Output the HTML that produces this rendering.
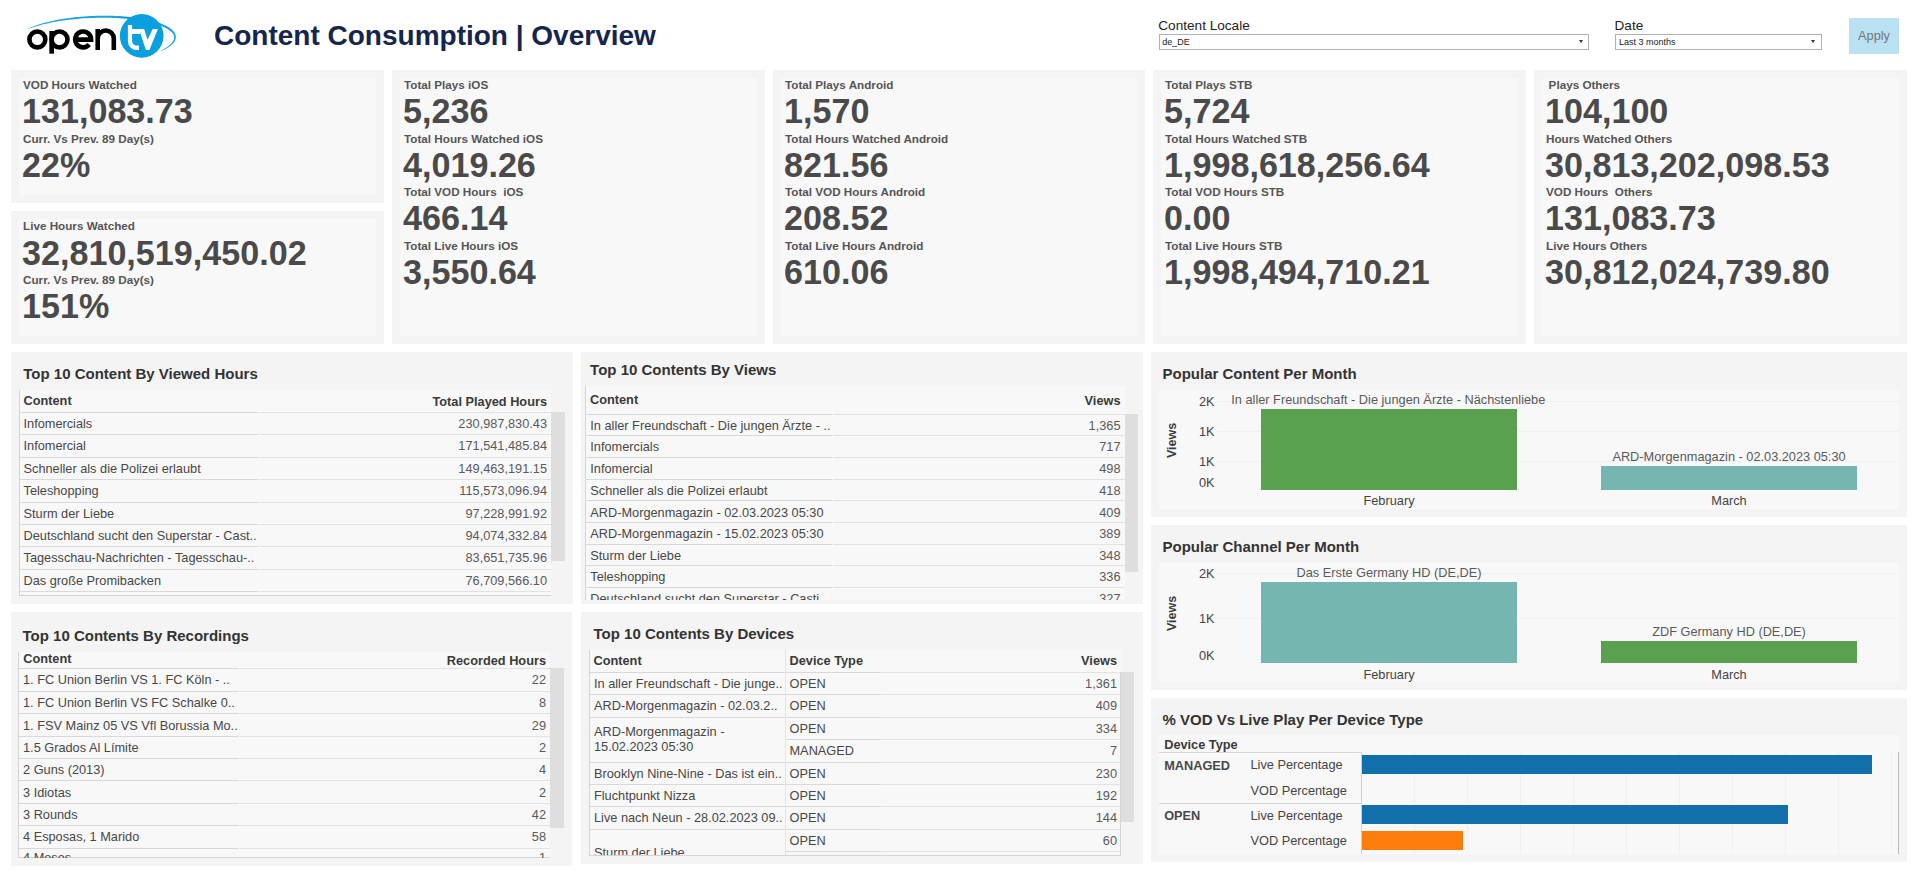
<!DOCTYPE html>
<html><head><meta charset="utf-8"><title>Content Consumption | Overview</title>
<style>
html,body{margin:0;padding:0;background:#fff;}
body{width:1912px;height:875px;position:relative;overflow:hidden;font-family:"Liberation Sans", sans-serif;}
body div{position:absolute;box-sizing:content-box;}
.t{white-space:pre;line-height:1;font-family:"Liberation Sans", sans-serif;}
</style></head><body>
<svg style="position:absolute;left:0;top:0" width="200" height="70" viewBox="0 0 200 70">
<path d="M27.41,29.12 L29.42,28.45 L31.48,27.73 L33.64,27.02 L35.88,26.33 L38.22,25.65 L40.63,24.99 L43.13,24.36 L45.70,23.74 L48.35,23.16 L51.06,22.59 L53.84,22.06 L56.69,21.55 L59.58,21.07 L62.53,20.62 L65.53,20.20 L68.57,19.81 L71.65,19.46 L74.77,19.14 L77.91,18.85 L81.07,18.59 L84.26,18.37 L87.46,18.18 L90.66,18.03 L93.87,17.91 L97.08,17.83 L100.29,17.78 L103.48,17.77 L106.66,17.79 L109.81,17.85 L112.94,17.95 L116.04,18.08 L119.10,18.25 L122.12,18.45 L125.10,18.68 L128.03,18.95 L130.90,19.26 L133.71,19.59 L136.46,19.96 L139.14,20.36 L141.75,20.80 L144.28,21.26 L146.73,21.76 L149.10,22.28 L151.37,22.83 L153.56,23.41 L155.65,24.01 L157.64,24.64 L159.53,25.29 L161.32,25.97 L163.00,26.67 L164.56,27.38 L166.01,28.11 L167.35,28.86 L168.57,29.63 L169.66,30.40 L170.64,31.18 L171.49,31.97 L172.22,32.77 L172.83,33.56 L173.33,34.36 L173.70,35.15 L173.96,35.94 L174.11,36.74 L174.15,37.55 L174.08,38.38 L173.90,39.22 L173.59,40.08 L173.17,40.96 L172.61,41.85 L171.94,42.76 L171.13,43.67 L170.20,44.59 L169.15,45.52 L167.97,46.44 L166.67,47.36 L165.26,48.28 L163.74,49.19 L162.10,50.11 L160.39,51.08 L160.45,51.22 L162.30,50.52 L164.02,49.73 L165.63,48.91 L167.13,48.07 L168.51,47.21 L169.78,46.33 L170.94,45.43 L171.97,44.52 L172.89,43.59 L173.70,42.64 L174.37,41.67 L174.93,40.69 L175.35,39.69 L175.64,38.67 L175.79,37.63 L175.79,36.60 L175.65,35.56 L175.37,34.53 L174.95,33.52 L174.39,32.53 L173.70,31.56 L172.89,30.62 L171.95,29.70 L170.89,28.81 L169.71,27.94 L168.42,27.09 L167.01,26.27 L165.49,25.48 L163.86,24.71 L162.13,23.97 L160.28,23.25 L158.34,22.56 L156.30,21.90 L154.16,21.27 L151.93,20.67 L149.60,20.10 L147.20,19.56 L144.70,19.06 L142.13,18.58 L139.49,18.14 L136.77,17.74 L133.99,17.37 L131.15,17.03 L128.24,16.73 L125.28,16.47 L122.28,16.24 L119.23,16.06 L116.14,15.90 L113.01,15.79 L109.86,15.71 L106.68,15.68 L103.48,15.67 L100.26,15.71 L97.03,15.79 L93.80,15.90 L90.57,16.05 L87.34,16.24 L84.12,16.47 L80.92,16.73 L77.74,17.03 L74.58,17.36 L71.45,17.74 L68.36,18.14 L65.30,18.58 L62.29,19.06 L59.33,19.57 L56.42,20.11 L53.57,20.68 L50.78,21.28 L48.06,21.92 L45.42,22.58 L42.84,23.28 L40.35,24.00 L37.94,24.75 L35.62,25.52 L33.40,26.33 L31.27,27.16 L29.25,28.03 L27.36,28.98Z" fill="#1aa3e2"/>
<circle cx="141.7" cy="35.85" r="21.85" fill="#0aa0e0"/>
<g fill="none" stroke="#000" stroke-width="4.6">
<circle cx="37.35" cy="39.45" r="7.95"/>
<circle cx="59.55" cy="39.45" r="7.95"/>
<path d="M51.65,31 V53.7"/>
<path d="M75,39.6 H91.1 A7.95,7.95 0 1 0 89.2,44.6"/>
<path d="M97.7,29 V49.9 M97.7,38.6 A8.05,8.05 0 0 1 113.8,38.6 V49.9"/>
</g>
<path d="M127.9,24.9 H132.1 V29.1 H140.2 V34 H132.1 V41 A4.5,4.5 0 0 0 136.6,45.5 H139 V50 H136.6 A8.7,8.7 0 0 1 127.9,41.3 Z" fill="#fff"/>
<path d="M139,29.1 L144.1,29.1 L147.6,39.8 L152.7,29.1 L157.9,29.1 L149.4,50 L145.9,50 Z" fill="#fff"/>
</svg>
<div class="t" style="left:214.00px;top:21.50px;font-size:28px;font-weight:bold;color:#15254b;">Content Consumption | Overview</div>
<div class="t" style="left:1158.30px;top:19.09px;font-size:13.6px;font-weight:normal;color:#222;">Content Locale</div>
<div style="left:1159px;top:34px;width:428px;height:14px;border:1px solid #b0b0b0;background:#fff"></div>
<div class="t" style="left:1162.30px;top:38.18px;font-size:9px;font-weight:normal;color:#222;">de_DE</div>
<div class="t" style="left:1614.50px;top:18.69px;font-size:13.6px;font-weight:normal;color:#222;">Date</div>
<div style="left:1615px;top:34px;width:205px;height:14px;border:1px solid #b0b0b0;background:#fff"></div>
<div class="t" style="left:1619.00px;top:38.18px;font-size:9px;font-weight:normal;color:#222;">Last 3 months</div>
<div style="left:1578.7px;top:40.3px;width:0;height:0;border-left:2.5px solid transparent;border-right:2.5px solid transparent;border-top:3.8px solid #333"></div>
<div style="left:1811.2px;top:40.3px;width:0;height:0;border-left:2.5px solid transparent;border-right:2.5px solid transparent;border-top:3.8px solid #333"></div>
<div style="left:1849px;top:18px;width:50px;height:36px;background:#b9e1f1;"></div>
<div class="t" style="left:1849.00px;width:50px;text-align:center;top:29.71px;font-size:12.75px;font-weight:normal;color:#777;">Apply</div>
<div style="left:11px;top:70px;width:373px;height:133px;background:#f4f4f4;"></div>
<div style="left:19px;top:78px;width:357px;height:117px;background:#f8f8f8;"></div>
<div class="t" style="left:23.00px;top:78.80px;font-size:11.7px;font-weight:bold;color:#555;">VOD Hours Watched</div>
<div class="t" style="left:22.30px;top:93.47px;font-size:35px;font-weight:bold;color:#4a4a4a;transform:scaleX(0.975);transform-origin:0 0;">131,083.73</div>
<div class="t" style="left:23.00px;top:132.55px;font-size:11.7px;font-weight:bold;color:#555;">Curr. Vs Prev. 89 Day(s)</div>
<div class="t" style="left:22.30px;top:146.97px;font-size:35px;font-weight:bold;color:#4a4a4a;transform:scaleX(0.975);transform-origin:0 0;">22%</div>
<div style="left:11px;top:211px;width:373px;height:133px;background:#f4f4f4;"></div>
<div style="left:19px;top:219px;width:357px;height:117px;background:#f8f8f8;"></div>
<div class="t" style="left:23.00px;top:220.30px;font-size:11.7px;font-weight:bold;color:#555;">Live Hours Watched</div>
<div class="t" style="left:22.30px;top:234.97px;font-size:35px;font-weight:bold;color:#4a4a4a;transform:scaleX(0.975);transform-origin:0 0;">32,810,519,450.02</div>
<div class="t" style="left:23.00px;top:274.05px;font-size:11.7px;font-weight:bold;color:#555;">Curr. Vs Prev. 89 Day(s)</div>
<div class="t" style="left:22.30px;top:288.47px;font-size:35px;font-weight:bold;color:#4a4a4a;transform:scaleX(0.975);transform-origin:0 0;">151%</div>
<div style="left:392px;top:70px;width:373px;height:274px;background:#f4f4f4;"></div>
<div style="left:400px;top:78px;width:357px;height:258px;background:#f8f8f8;"></div>
<div class="t" style="left:404.00px;top:78.80px;font-size:11.7px;font-weight:bold;color:#555;">Total Plays iOS</div>
<div class="t" style="left:403.30px;top:93.47px;font-size:35px;font-weight:bold;color:#4a4a4a;transform:scaleX(0.975);transform-origin:0 0;">5,236</div>
<div class="t" style="left:404.00px;top:132.55px;font-size:11.7px;font-weight:bold;color:#555;">Total Hours Watched iOS</div>
<div class="t" style="left:403.30px;top:146.97px;font-size:35px;font-weight:bold;color:#4a4a4a;transform:scaleX(0.975);transform-origin:0 0;">4,019.26</div>
<div class="t" style="left:404.00px;top:186.30px;font-size:11.7px;font-weight:bold;color:#555;">Total VOD Hours  iOS</div>
<div class="t" style="left:403.30px;top:200.47px;font-size:35px;font-weight:bold;color:#4a4a4a;transform:scaleX(0.975);transform-origin:0 0;">466.14</div>
<div class="t" style="left:404.00px;top:240.05px;font-size:11.7px;font-weight:bold;color:#555;">Total Live Hours iOS</div>
<div class="t" style="left:403.30px;top:253.97px;font-size:35px;font-weight:bold;color:#4a4a4a;transform:scaleX(0.975);transform-origin:0 0;">3,550.64</div>
<div style="left:773px;top:70px;width:372px;height:274px;background:#f4f4f4;"></div>
<div style="left:781px;top:78px;width:356px;height:258px;background:#f8f8f8;"></div>
<div class="t" style="left:785.00px;top:78.80px;font-size:11.7px;font-weight:bold;color:#555;">Total Plays Android</div>
<div class="t" style="left:784.30px;top:93.47px;font-size:35px;font-weight:bold;color:#4a4a4a;transform:scaleX(0.975);transform-origin:0 0;">1,570</div>
<div class="t" style="left:785.00px;top:132.55px;font-size:11.7px;font-weight:bold;color:#555;">Total Hours Watched Android</div>
<div class="t" style="left:784.30px;top:146.97px;font-size:35px;font-weight:bold;color:#4a4a4a;transform:scaleX(0.975);transform-origin:0 0;">821.56</div>
<div class="t" style="left:785.00px;top:186.30px;font-size:11.7px;font-weight:bold;color:#555;">Total VOD Hours Android</div>
<div class="t" style="left:784.30px;top:200.47px;font-size:35px;font-weight:bold;color:#4a4a4a;transform:scaleX(0.975);transform-origin:0 0;">208.52</div>
<div class="t" style="left:785.00px;top:240.05px;font-size:11.7px;font-weight:bold;color:#555;">Total Live Hours Android</div>
<div class="t" style="left:784.30px;top:253.97px;font-size:35px;font-weight:bold;color:#4a4a4a;transform:scaleX(0.975);transform-origin:0 0;">610.06</div>
<div style="left:1153px;top:70px;width:373px;height:274px;background:#f4f4f4;"></div>
<div style="left:1161px;top:78px;width:357px;height:258px;background:#f8f8f8;"></div>
<div class="t" style="left:1165.00px;top:78.80px;font-size:11.7px;font-weight:bold;color:#555;">Total Plays STB</div>
<div class="t" style="left:1164.30px;top:93.47px;font-size:35px;font-weight:bold;color:#4a4a4a;transform:scaleX(0.975);transform-origin:0 0;">5,724</div>
<div class="t" style="left:1165.00px;top:132.55px;font-size:11.7px;font-weight:bold;color:#555;">Total Hours Watched STB</div>
<div class="t" style="left:1164.30px;top:146.97px;font-size:35px;font-weight:bold;color:#4a4a4a;transform:scaleX(0.975);transform-origin:0 0;">1,998,618,256.64</div>
<div class="t" style="left:1165.00px;top:186.30px;font-size:11.7px;font-weight:bold;color:#555;">Total VOD Hours STB</div>
<div class="t" style="left:1164.30px;top:200.47px;font-size:35px;font-weight:bold;color:#4a4a4a;transform:scaleX(0.975);transform-origin:0 0;">0.00</div>
<div class="t" style="left:1165.00px;top:240.05px;font-size:11.7px;font-weight:bold;color:#555;">Total Live Hours STB</div>
<div class="t" style="left:1164.30px;top:253.97px;font-size:35px;font-weight:bold;color:#4a4a4a;transform:scaleX(0.975);transform-origin:0 0;">1,998,494,710.21</div>
<div style="left:1534px;top:70px;width:373px;height:274px;background:#f4f4f4;"></div>
<div style="left:1542px;top:78px;width:357px;height:258px;background:#f8f8f8;"></div>
<div class="t" style="left:1548.60px;top:78.80px;font-size:11.7px;font-weight:bold;color:#555;">Plays Others</div>
<div class="t" style="left:1545.30px;top:93.47px;font-size:35px;font-weight:bold;color:#4a4a4a;transform:scaleX(0.975);transform-origin:0 0;">104,100</div>
<div class="t" style="left:1546.00px;top:132.55px;font-size:11.7px;font-weight:bold;color:#555;">Hours Watched Others</div>
<div class="t" style="left:1545.30px;top:146.97px;font-size:35px;font-weight:bold;color:#4a4a4a;transform:scaleX(0.975);transform-origin:0 0;">30,813,202,098.53</div>
<div class="t" style="left:1546.00px;top:186.30px;font-size:11.7px;font-weight:bold;color:#555;">VOD Hours  Others</div>
<div class="t" style="left:1545.30px;top:200.47px;font-size:35px;font-weight:bold;color:#4a4a4a;transform:scaleX(0.975);transform-origin:0 0;">131,083.73</div>
<div class="t" style="left:1546.00px;top:240.05px;font-size:11.7px;font-weight:bold;color:#555;">Live Hours Others</div>
<div class="t" style="left:1545.30px;top:253.97px;font-size:35px;font-weight:bold;color:#4a4a4a;transform:scaleX(0.975);transform-origin:0 0;">30,812,024,739.80</div>
<div style="left:11px;top:352px;width:562px;height:252px;background:#f4f4f4;"></div>
<div class="t" style="left:23.30px;top:366.30px;font-size:15px;font-weight:bold;color:#333;">Top 10 Content By Viewed Hours</div>
<div style="left:19px;top:390px;width:532px;height:206px;background:#f8f8f8;"></div>
<div style="left:19.00px;top:390px;width:1px;height:206.00px;background:#d4d4d4"></div>
<div style="left:19px;top:595.00px;width:532px;height:1px;background:#d4d4d4"></div>
<div style="left:20px;top:411.80px;width:239px;height:1px;background:#d9d9d9"></div>
<div style="left:260px;top:411.80px;width:291px;height:1px;background:#e2e2e2"></div>
<div style="left:20px;top:434.00px;width:239px;height:1px;background:#d9d9d9"></div>
<div style="left:260px;top:434.00px;width:291px;height:1px;background:#e2e2e2"></div>
<div style="left:20px;top:456.50px;width:239px;height:1px;background:#d9d9d9"></div>
<div style="left:260px;top:456.50px;width:291px;height:1px;background:#e2e2e2"></div>
<div style="left:20px;top:478.80px;width:239px;height:1px;background:#d9d9d9"></div>
<div style="left:260px;top:478.80px;width:291px;height:1px;background:#e2e2e2"></div>
<div style="left:20px;top:501.60px;width:239px;height:1px;background:#d9d9d9"></div>
<div style="left:260px;top:501.60px;width:291px;height:1px;background:#e2e2e2"></div>
<div style="left:20px;top:523.80px;width:239px;height:1px;background:#d9d9d9"></div>
<div style="left:260px;top:523.80px;width:291px;height:1px;background:#e2e2e2"></div>
<div style="left:20px;top:546.00px;width:239px;height:1px;background:#d9d9d9"></div>
<div style="left:260px;top:546.00px;width:291px;height:1px;background:#e2e2e2"></div>
<div style="left:20px;top:568.50px;width:239px;height:1px;background:#d9d9d9"></div>
<div style="left:260px;top:568.50px;width:291px;height:1px;background:#e2e2e2"></div>
<div style="left:20px;top:590.80px;width:239px;height:1px;background:#d9d9d9"></div>
<div style="left:260px;top:590.80px;width:291px;height:1px;background:#e2e2e2"></div>
<div style="left:551px;top:412px;width:14px;height:149px;background:#dedede;"></div>
<div class="t" style="left:23.50px;top:395.41px;font-size:12.75px;font-weight:bold;color:#3a3a3a;">Content</div>
<div class="t" style="left:-53.00px;width:600px;text-align:right;top:395.71px;font-size:12.75px;font-weight:bold;color:#3a3a3a;">Total Played Hours</div>
<div class="t" style="left:23.50px;top:417.91px;font-size:12.75px;font-weight:normal;color:#474747;">Infomercials</div>
<div class="t" style="left:-53.00px;width:600px;text-align:right;top:417.91px;font-size:12.75px;font-weight:normal;color:#5a5a5a;">230,987,830.43</div>
<div class="t" style="left:23.50px;top:440.11px;font-size:12.75px;font-weight:normal;color:#474747;">Infomercial</div>
<div class="t" style="left:-53.00px;width:600px;text-align:right;top:440.11px;font-size:12.75px;font-weight:normal;color:#5a5a5a;">171,541,485.84</div>
<div class="t" style="left:23.50px;top:462.61px;font-size:12.75px;font-weight:normal;color:#474747;">Schneller als die Polizei erlaubt</div>
<div class="t" style="left:-53.00px;width:600px;text-align:right;top:462.61px;font-size:12.75px;font-weight:normal;color:#5a5a5a;">149,463,191.15</div>
<div class="t" style="left:23.50px;top:484.91px;font-size:12.75px;font-weight:normal;color:#474747;">Teleshopping</div>
<div class="t" style="left:-53.00px;width:600px;text-align:right;top:484.91px;font-size:12.75px;font-weight:normal;color:#5a5a5a;">115,573,096.94</div>
<div class="t" style="left:23.50px;top:507.71px;font-size:12.75px;font-weight:normal;color:#474747;">Sturm der Liebe</div>
<div class="t" style="left:-53.00px;width:600px;text-align:right;top:507.71px;font-size:12.75px;font-weight:normal;color:#5a5a5a;">97,228,991.92</div>
<div class="t" style="left:23.50px;top:529.91px;font-size:12.75px;font-weight:normal;color:#474747;">Deutschland sucht den Superstar - Cast..</div>
<div class="t" style="left:-53.00px;width:600px;text-align:right;top:529.91px;font-size:12.75px;font-weight:normal;color:#5a5a5a;">94,074,332.84</div>
<div class="t" style="left:23.50px;top:552.11px;font-size:12.75px;font-weight:normal;color:#474747;">Tagesschau-Nachrichten - Tagesschau-..</div>
<div class="t" style="left:-53.00px;width:600px;text-align:right;top:552.11px;font-size:12.75px;font-weight:normal;color:#5a5a5a;">83,651,735.96</div>
<div class="t" style="left:23.50px;top:574.61px;font-size:12.75px;font-weight:normal;color:#474747;">Das große Promibacken</div>
<div class="t" style="left:-53.00px;width:600px;text-align:right;top:574.61px;font-size:12.75px;font-weight:normal;color:#5a5a5a;">76,709,566.10</div>
<div style="left:581px;top:352px;width:562px;height:252px;background:#f4f4f4;"></div>
<div class="t" style="left:590.10px;top:361.90px;font-size:15px;font-weight:bold;color:#333;">Top 10 Contents By Views</div>
<div style="left:585px;top:386px;width:540px;height:214px;background:#f8f8f8;"></div>
<div style="left:585.00px;top:386px;width:1px;height:214.00px;background:#d4d4d4"></div>
<div style="left:586px;top:413.50px;width:246px;height:1px;background:#d9d9d9"></div>
<div style="left:833px;top:413.50px;width:292px;height:1px;background:#e2e2e2"></div>
<div style="left:586px;top:435.30px;width:246px;height:1px;background:#d9d9d9"></div>
<div style="left:833px;top:435.30px;width:292px;height:1px;background:#e2e2e2"></div>
<div style="left:586px;top:457.10px;width:246px;height:1px;background:#d9d9d9"></div>
<div style="left:833px;top:457.10px;width:292px;height:1px;background:#e2e2e2"></div>
<div style="left:586px;top:478.60px;width:246px;height:1px;background:#d9d9d9"></div>
<div style="left:833px;top:478.60px;width:292px;height:1px;background:#e2e2e2"></div>
<div style="left:586px;top:500.40px;width:246px;height:1px;background:#d9d9d9"></div>
<div style="left:833px;top:500.40px;width:292px;height:1px;background:#e2e2e2"></div>
<div style="left:586px;top:521.90px;width:246px;height:1px;background:#d9d9d9"></div>
<div style="left:833px;top:521.90px;width:292px;height:1px;background:#e2e2e2"></div>
<div style="left:586px;top:543.70px;width:246px;height:1px;background:#d9d9d9"></div>
<div style="left:833px;top:543.70px;width:292px;height:1px;background:#e2e2e2"></div>
<div style="left:586px;top:565.20px;width:246px;height:1px;background:#d9d9d9"></div>
<div style="left:833px;top:565.20px;width:292px;height:1px;background:#e2e2e2"></div>
<div style="left:586px;top:586.70px;width:246px;height:1px;background:#d9d9d9"></div>
<div style="left:833px;top:586.70px;width:292px;height:1px;background:#e2e2e2"></div>
<div style="left:1125px;top:414px;width:13px;height:158px;background:#dedede;"></div>
<div class="t" style="left:590.00px;top:394.21px;font-size:12.75px;font-weight:bold;color:#3a3a3a;">Content</div>
<div class="t" style="left:520.50px;width:600px;text-align:right;top:395.41px;font-size:12.75px;font-weight:bold;color:#3a3a3a;">Views</div>
<div style="left:585px;top:386px;width:540px;height:214px;overflow:hidden">
<div class="t" style="left:5.3px;top:33.61px;font-size:12.75px;color:#474747">In aller Freundschaft - Die jungen Ärzte - ..</div>
<div class="t" style="left:335.5px;width:200px;text-align:right;top:33.61px;font-size:12.75px;color:#5a5a5a">1,365</div>
<div class="t" style="left:5.3px;top:55.41px;font-size:12.75px;color:#474747">Infomercials</div>
<div class="t" style="left:335.5px;width:200px;text-align:right;top:55.41px;font-size:12.75px;color:#5a5a5a">717</div>
<div class="t" style="left:5.3px;top:77.21px;font-size:12.75px;color:#474747">Infomercial</div>
<div class="t" style="left:335.5px;width:200px;text-align:right;top:77.21px;font-size:12.75px;color:#5a5a5a">498</div>
<div class="t" style="left:5.3px;top:98.71px;font-size:12.75px;color:#474747">Schneller als die Polizei erlaubt</div>
<div class="t" style="left:335.5px;width:200px;text-align:right;top:98.71px;font-size:12.75px;color:#5a5a5a">418</div>
<div class="t" style="left:5.3px;top:120.51px;font-size:12.75px;color:#474747">ARD-Morgenmagazin - 02.03.2023 05:30</div>
<div class="t" style="left:335.5px;width:200px;text-align:right;top:120.51px;font-size:12.75px;color:#5a5a5a">409</div>
<div class="t" style="left:5.3px;top:142.01px;font-size:12.75px;color:#474747">ARD-Morgenmagazin - 15.02.2023 05:30</div>
<div class="t" style="left:335.5px;width:200px;text-align:right;top:142.01px;font-size:12.75px;color:#5a5a5a">389</div>
<div class="t" style="left:5.3px;top:163.81px;font-size:12.75px;color:#474747">Sturm der Liebe</div>
<div class="t" style="left:335.5px;width:200px;text-align:right;top:163.81px;font-size:12.75px;color:#5a5a5a">348</div>
<div class="t" style="left:5.3px;top:185.31px;font-size:12.75px;color:#474747">Teleshopping</div>
<div class="t" style="left:335.5px;width:200px;text-align:right;top:185.31px;font-size:12.75px;color:#5a5a5a">336</div>
<div class="t" style="left:5.3px;top:206.81px;font-size:12.75px;color:#474747">Deutschland sucht den Superstar - Casti..</div>
<div class="t" style="left:335.5px;width:200px;text-align:right;top:206.81px;font-size:12.75px;color:#5a5a5a">327</div>
</div>
<div style="left:11px;top:612px;width:561px;height:254px;background:#f4f4f4;"></div>
<div class="t" style="left:22.50px;top:628.30px;font-size:15px;font-weight:bold;color:#333;">Top 10 Contents By Recordings</div>
<div style="left:18px;top:652px;width:532px;height:206px;background:#f8f8f8;"></div>
<div style="left:18.00px;top:652px;width:1px;height:206.00px;background:#d4d4d4"></div>
<div style="left:18px;top:857.00px;width:532px;height:1px;background:#d4d4d4"></div>
<div style="left:19px;top:668.00px;width:220px;height:1px;background:#d9d9d9"></div>
<div style="left:240px;top:668.00px;width:310px;height:1px;background:#e2e2e2"></div>
<div style="left:19px;top:690.70px;width:220px;height:1px;background:#d9d9d9"></div>
<div style="left:240px;top:690.70px;width:310px;height:1px;background:#e2e2e2"></div>
<div style="left:19px;top:713.30px;width:220px;height:1px;background:#d9d9d9"></div>
<div style="left:240px;top:713.30px;width:310px;height:1px;background:#e2e2e2"></div>
<div style="left:19px;top:735.60px;width:220px;height:1px;background:#d9d9d9"></div>
<div style="left:240px;top:735.60px;width:310px;height:1px;background:#e2e2e2"></div>
<div style="left:19px;top:757.90px;width:220px;height:1px;background:#d9d9d9"></div>
<div style="left:240px;top:757.90px;width:310px;height:1px;background:#e2e2e2"></div>
<div style="left:19px;top:780.30px;width:220px;height:1px;background:#d9d9d9"></div>
<div style="left:240px;top:780.30px;width:310px;height:1px;background:#e2e2e2"></div>
<div style="left:19px;top:802.90px;width:220px;height:1px;background:#d9d9d9"></div>
<div style="left:240px;top:802.90px;width:310px;height:1px;background:#e2e2e2"></div>
<div style="left:19px;top:825.20px;width:220px;height:1px;background:#d9d9d9"></div>
<div style="left:240px;top:825.20px;width:310px;height:1px;background:#e2e2e2"></div>
<div style="left:19px;top:847.50px;width:220px;height:1px;background:#d9d9d9"></div>
<div style="left:240px;top:847.50px;width:310px;height:1px;background:#e2e2e2"></div>
<div style="left:550px;top:668px;width:14px;height:160px;background:#dedede;"></div>
<div class="t" style="left:23.30px;top:653.41px;font-size:12.75px;font-weight:bold;color:#3a3a3a;">Content</div>
<div class="t" style="left:-54.00px;width:600px;text-align:right;top:654.61px;font-size:12.75px;font-weight:bold;color:#3a3a3a;">Recorded Hours</div>
<div style="left:19px;top:652px;width:531px;height:205.5px;overflow:hidden">
<div class="t" style="left:4px;top:22.21px;font-size:12.75px;color:#474747">1. FC Union Berlin VS 1. FC Köln - ..</div>
<div class="t" style="left:327px;width:200px;text-align:right;top:22.21px;font-size:12.75px;color:#5a5a5a">22</div>
<div class="t" style="left:4px;top:44.91px;font-size:12.75px;color:#474747">1. FC Union Berlin VS FC Schalke 0..</div>
<div class="t" style="left:327px;width:200px;text-align:right;top:44.91px;font-size:12.75px;color:#5a5a5a">8</div>
<div class="t" style="left:4px;top:67.51px;font-size:12.75px;color:#474747">1. FSV Mainz 05 VS Vfl Borussia Mo..</div>
<div class="t" style="left:327px;width:200px;text-align:right;top:67.51px;font-size:12.75px;color:#5a5a5a">29</div>
<div class="t" style="left:4px;top:89.81px;font-size:12.75px;color:#474747">1.5 Grados Al Límite</div>
<div class="t" style="left:327px;width:200px;text-align:right;top:89.81px;font-size:12.75px;color:#5a5a5a">2</div>
<div class="t" style="left:4px;top:112.11px;font-size:12.75px;color:#474747">2 Guns (2013)</div>
<div class="t" style="left:327px;width:200px;text-align:right;top:112.11px;font-size:12.75px;color:#5a5a5a">4</div>
<div class="t" style="left:4px;top:134.51px;font-size:12.75px;color:#474747">3 Idiotas</div>
<div class="t" style="left:327px;width:200px;text-align:right;top:134.51px;font-size:12.75px;color:#5a5a5a">2</div>
<div class="t" style="left:4px;top:157.11px;font-size:12.75px;color:#474747">3 Rounds</div>
<div class="t" style="left:327px;width:200px;text-align:right;top:157.11px;font-size:12.75px;color:#5a5a5a">42</div>
<div class="t" style="left:4px;top:179.41px;font-size:12.75px;color:#474747">4 Esposas, 1 Marido</div>
<div class="t" style="left:327px;width:200px;text-align:right;top:179.41px;font-size:12.75px;color:#5a5a5a">58</div>
<div class="t" style="left:4px;top:200.21px;font-size:12.75px;color:#474747">4 Meses</div>
<div class="t" style="left:327px;width:200px;text-align:right;top:200.21px;font-size:12.75px;color:#5a5a5a">1</div>
</div>
<div style="left:581px;top:612px;width:562px;height:252px;background:#f4f4f4;"></div>
<div class="t" style="left:593.50px;top:626.30px;font-size:15px;font-weight:bold;color:#333;">Top 10 Contents By Devices</div>
<div style="left:590px;top:650px;width:531px;height:206px;background:#f8f8f8;"></div>
<div style="left:589.00px;top:650px;width:1px;height:206.00px;background:#d4d4d4"></div>
<div style="left:1120.00px;top:672px;width:1px;height:184.00px;background:#d4d4d4"></div>
<div style="left:590px;top:855.00px;width:531px;height:1px;background:#d4d4d4"></div>
<div style="left:785.00px;top:650px;width:1px;height:205.00px;background:#e4e4e4"></div>
<div style="left:590px;top:671.80px;width:195px;height:1px;background:#d9d9d9"></div>
<div style="left:786px;top:671.80px;width:95px;height:1px;background:#d9d9d9"></div>
<div style="left:882px;top:671.80px;width:239px;height:1px;background:#e2e2e2"></div>
<div style="left:590px;top:693.80px;width:195px;height:1px;background:#d9d9d9"></div>
<div style="left:786px;top:693.80px;width:95px;height:1px;background:#d9d9d9"></div>
<div style="left:882px;top:693.80px;width:239px;height:1px;background:#e2e2e2"></div>
<div style="left:590px;top:716.70px;width:195px;height:1px;background:#d9d9d9"></div>
<div style="left:786px;top:716.70px;width:95px;height:1px;background:#d9d9d9"></div>
<div style="left:882px;top:716.70px;width:239px;height:1px;background:#e2e2e2"></div>
<div style="left:786px;top:739.00px;width:95px;height:1px;background:#d9d9d9"></div>
<div style="left:882px;top:739.00px;width:239px;height:1px;background:#e2e2e2"></div>
<div style="left:590px;top:761.60px;width:195px;height:1px;background:#d9d9d9"></div>
<div style="left:786px;top:761.60px;width:95px;height:1px;background:#d9d9d9"></div>
<div style="left:882px;top:761.60px;width:239px;height:1px;background:#e2e2e2"></div>
<div style="left:590px;top:783.90px;width:195px;height:1px;background:#d9d9d9"></div>
<div style="left:786px;top:783.90px;width:95px;height:1px;background:#d9d9d9"></div>
<div style="left:882px;top:783.90px;width:239px;height:1px;background:#e2e2e2"></div>
<div style="left:590px;top:805.90px;width:195px;height:1px;background:#d9d9d9"></div>
<div style="left:786px;top:805.90px;width:95px;height:1px;background:#d9d9d9"></div>
<div style="left:882px;top:805.90px;width:239px;height:1px;background:#e2e2e2"></div>
<div style="left:590px;top:828.80px;width:195px;height:1px;background:#d9d9d9"></div>
<div style="left:786px;top:828.80px;width:95px;height:1px;background:#d9d9d9"></div>
<div style="left:882px;top:828.80px;width:239px;height:1px;background:#e2e2e2"></div>
<div style="left:786px;top:850.80px;width:95px;height:1px;background:#d9d9d9"></div>
<div style="left:882px;top:850.80px;width:239px;height:1px;background:#e2e2e2"></div>
<div style="left:1121px;top:672px;width:13px;height:150px;background:#dedede;"></div>
<div class="t" style="left:593.50px;top:654.51px;font-size:12.75px;font-weight:bold;color:#3a3a3a;">Content</div>
<div class="t" style="left:789.50px;top:654.51px;font-size:12.75px;font-weight:bold;color:#3a3a3a;">Device Type</div>
<div class="t" style="left:517.00px;width:600px;text-align:right;top:655.01px;font-size:12.75px;font-weight:bold;color:#3a3a3a;">Views</div>
<div style="left:590px;top:650px;width:531px;height:205px;overflow:hidden">
<div class="t" style="left:199.50px;top:27.81px;font-size:12.75px;color:#474747">OPEN</div>
<div class="t" style="left:327.00px;width:200px;text-align:right;top:27.81px;font-size:12.75px;color:#5a5a5a">1,361</div>
<div class="t" style="left:199.50px;top:49.81px;font-size:12.75px;color:#474747">OPEN</div>
<div class="t" style="left:327.00px;width:200px;text-align:right;top:49.81px;font-size:12.75px;color:#5a5a5a">409</div>
<div class="t" style="left:199.50px;top:72.71px;font-size:12.75px;color:#474747">OPEN</div>
<div class="t" style="left:327.00px;width:200px;text-align:right;top:72.71px;font-size:12.75px;color:#5a5a5a">334</div>
<div class="t" style="left:199.50px;top:95.01px;font-size:12.75px;color:#474747">MANAGED</div>
<div class="t" style="left:327.00px;width:200px;text-align:right;top:95.01px;font-size:12.75px;color:#5a5a5a">7</div>
<div class="t" style="left:199.50px;top:117.61px;font-size:12.75px;color:#474747">OPEN</div>
<div class="t" style="left:327.00px;width:200px;text-align:right;top:117.61px;font-size:12.75px;color:#5a5a5a">230</div>
<div class="t" style="left:199.50px;top:139.91px;font-size:12.75px;color:#474747">OPEN</div>
<div class="t" style="left:327.00px;width:200px;text-align:right;top:139.91px;font-size:12.75px;color:#5a5a5a">192</div>
<div class="t" style="left:199.50px;top:161.91px;font-size:12.75px;color:#474747">OPEN</div>
<div class="t" style="left:327.00px;width:200px;text-align:right;top:161.91px;font-size:12.75px;color:#5a5a5a">144</div>
<div class="t" style="left:199.50px;top:184.81px;font-size:12.75px;color:#474747">OPEN</div>
<div class="t" style="left:327.00px;width:200px;text-align:right;top:184.81px;font-size:12.75px;color:#5a5a5a">60</div>
<div class="t" style="left:4.00px;top:27.81px;font-size:12.75px;color:#474747">In aller Freundschaft - Die junge..</div>
<div class="t" style="left:4.00px;top:49.81px;font-size:12.75px;color:#474747">ARD-Morgenmagazin - 02.03.2..</div>
<div class="t" style="left:4.00px;top:117.61px;font-size:12.75px;color:#474747">Brooklyn Nine-Nine - Das ist ein..</div>
<div class="t" style="left:4.00px;top:139.91px;font-size:12.75px;color:#474747">Fluchtpunkt Nizza</div>
<div class="t" style="left:4.00px;top:161.91px;font-size:12.75px;color:#474747">Live nach Neun - 28.02.2023 09..</div>
<div class="t" style="left:4.00px;top:75.91px;font-size:12.75px;color:#474747">ARD-Morgenmagazin -</div>
<div class="t" style="left:4.00px;top:90.91px;font-size:12.75px;color:#474747">15.02.2023 05:30</div>
<div class="t" style="left:4.00px;top:196.51px;font-size:12.75px;color:#474747">Sturm der Liebe</div>
</div>
<div style="left:1151px;top:352px;width:756px;height:165px;background:#f4f4f4;"></div>
<div style="left:1159px;top:390px;width:740px;height:119px;background:#f8f8f8;"></div>
<div class="t" style="left:1162.50px;top:366.30px;font-size:15px;font-weight:bold;color:#333;">Popular Content Per Month</div>
<div style="left:1217px;top:400.50px;width:682px;height:1px;background:#f0f0f0"></div>
<div style="left:1217px;top:430.50px;width:682px;height:1px;background:#f0f0f0"></div>
<div style="left:1217px;top:460.50px;width:682px;height:1px;background:#f0f0f0"></div>
<div style="left:1261px;top:409px;width:256px;height:81px;background:#59a14f;"></div>
<div style="left:1601px;top:466px;width:256px;height:24px;background:#76b6b1;"></div>
<div class="t" style="left:1154.50px;width:60px;text-align:right;top:395.81px;font-size:12.75px;font-weight:normal;color:#444;">2K</div>
<div class="t" style="left:1154.50px;width:60px;text-align:right;top:426.01px;font-size:12.75px;font-weight:normal;color:#444;">1K</div>
<div class="t" style="left:1154.50px;width:60px;text-align:right;top:456.21px;font-size:12.75px;font-weight:normal;color:#444;">1K</div>
<div class="t" style="left:1154.50px;width:60px;text-align:right;top:476.81px;font-size:12.75px;font-weight:normal;color:#444;">0K</div>
<div class="t" style="left:1142.4px;width:60px;text-align:center;top:433.90px;font-size:12.5px;line-height:13px;font-weight:bold;color:#3d3d3d;transform:rotate(-90deg)">Views</div>
<div class="t" style="left:1089.00px;width:600px;text-align:center;top:495.31px;font-size:12.75px;font-weight:normal;color:#444;">February</div>
<div class="t" style="left:1429.00px;width:600px;text-align:center;top:495.31px;font-size:12.75px;font-weight:normal;color:#444;">March</div>
<div class="t" style="left:1088.30px;width:600px;text-align:center;top:394.41px;font-size:12.75px;font-weight:normal;color:#5a5a5a;">In aller Freundschaft - Die jungen Ärzte - Nächstenliebe</div>
<div class="t" style="left:1429.00px;width:600px;text-align:center;top:451.01px;font-size:12.75px;font-weight:normal;color:#5a5a5a;">ARD-Morgenmagazin - 02.03.2023 05:30</div>
<div style="left:1151px;top:525px;width:756px;height:165px;background:#f4f4f4;"></div>
<div style="left:1159px;top:563px;width:740px;height:119px;background:#f8f8f8;"></div>
<div class="t" style="left:1162.50px;top:539.30px;font-size:15px;font-weight:bold;color:#333;">Popular Channel Per Month</div>
<div style="left:1217px;top:573.00px;width:682px;height:1px;background:#f0f0f0"></div>
<div style="left:1217px;top:618.00px;width:682px;height:1px;background:#f0f0f0"></div>
<div style="left:1261px;top:582px;width:256px;height:80.5px;background:#76b6b1;"></div>
<div style="left:1601px;top:640.5px;width:256px;height:22.0px;background:#59a14f;"></div>
<div class="t" style="left:1154.50px;width:60px;text-align:right;top:567.91px;font-size:12.75px;font-weight:normal;color:#444;">2K</div>
<div class="t" style="left:1154.50px;width:60px;text-align:right;top:613.21px;font-size:12.75px;font-weight:normal;color:#444;">1K</div>
<div class="t" style="left:1154.50px;width:60px;text-align:right;top:649.91px;font-size:12.75px;font-weight:normal;color:#444;">0K</div>
<div class="t" style="left:1142.4px;width:60px;text-align:center;top:606.80px;font-size:12.5px;line-height:13px;font-weight:bold;color:#3d3d3d;transform:rotate(-90deg)">Views</div>
<div class="t" style="left:1089.00px;width:600px;text-align:center;top:668.61px;font-size:12.75px;font-weight:normal;color:#444;">February</div>
<div class="t" style="left:1429.00px;width:600px;text-align:center;top:668.61px;font-size:12.75px;font-weight:normal;color:#444;">March</div>
<div class="t" style="left:1089.00px;width:600px;text-align:center;top:567.41px;font-size:12.75px;font-weight:normal;color:#5a5a5a;">Das Erste Germany HD (DE,DE)</div>
<div class="t" style="left:1429.00px;width:600px;text-align:center;top:625.51px;font-size:12.75px;font-weight:normal;color:#5a5a5a;">ZDF Germany HD (DE,DE)</div>
<div style="left:1151px;top:698px;width:756px;height:164px;background:#f4f4f4;"></div>
<div style="left:1159px;top:735px;width:740px;height:119px;background:#f8f8f8;"></div>
<div class="t" style="left:1162.50px;top:712.30px;font-size:15px;font-weight:bold;color:#333;">% VOD Vs Live Play Per Device Type</div>
<div class="t" style="left:1164.20px;top:738.81px;font-size:12.75px;font-weight:bold;color:#3a3a3a;">Device Type</div>
<div style="left:1414.00px;top:752px;width:1px;height:102.00px;background:#f0f0f0"></div>
<div style="left:1467.00px;top:752px;width:1px;height:102.00px;background:#f0f0f0"></div>
<div style="left:1519.90px;top:752px;width:1px;height:102.00px;background:#f0f0f0"></div>
<div style="left:1572.90px;top:752px;width:1px;height:102.00px;background:#f0f0f0"></div>
<div style="left:1625.80px;top:752px;width:1px;height:102.00px;background:#f0f0f0"></div>
<div style="left:1678.80px;top:752px;width:1px;height:102.00px;background:#f0f0f0"></div>
<div style="left:1731.70px;top:752px;width:1px;height:102.00px;background:#f0f0f0"></div>
<div style="left:1785.10px;top:752px;width:1px;height:102.00px;background:#f0f0f0"></div>
<div style="left:1838.00px;top:752px;width:1px;height:102.00px;background:#f0f0f0"></div>
<div style="left:1891.00px;top:752px;width:1px;height:102.00px;background:#f0f0f0"></div>
<div style="left:1159px;top:752.00px;width:203px;height:1px;background:#d8d8d8"></div>
<div style="left:1159px;top:802.80px;width:203px;height:1px;background:#d8d8d8"></div>
<div style="left:1361.30px;top:752px;width:1px;height:102.00px;background:#d0d0d0"></div>
<div style="left:1897.80px;top:752px;width:1px;height:102.00px;background:#bdbdbd"></div>
<div style="left:1362px;top:755px;width:510px;height:19px;background:#1170aa;"></div>
<div style="left:1362px;top:805.3px;width:426px;height:18.90000000000009px;background:#1170aa;"></div>
<div style="left:1362px;top:831px;width:101px;height:18.700000000000045px;background:#fc7d0b;"></div>
<div class="t" style="left:1164.20px;top:760.21px;font-size:12.75px;font-weight:bold;color:#484848;">MANAGED</div>
<div class="t" style="left:1164.20px;top:810.01px;font-size:12.75px;font-weight:bold;color:#484848;">OPEN</div>
<div class="t" style="left:1250.50px;top:758.81px;font-size:12.75px;font-weight:normal;color:#444;">Live Percentage</div>
<div class="t" style="left:1250.50px;top:784.71px;font-size:12.75px;font-weight:normal;color:#444;">VOD Percentage</div>
<div class="t" style="left:1250.50px;top:810.01px;font-size:12.75px;font-weight:normal;color:#444;">Live Percentage</div>
<div class="t" style="left:1250.50px;top:835.41px;font-size:12.75px;font-weight:normal;color:#444;">VOD Percentage</div>
</body></html>
